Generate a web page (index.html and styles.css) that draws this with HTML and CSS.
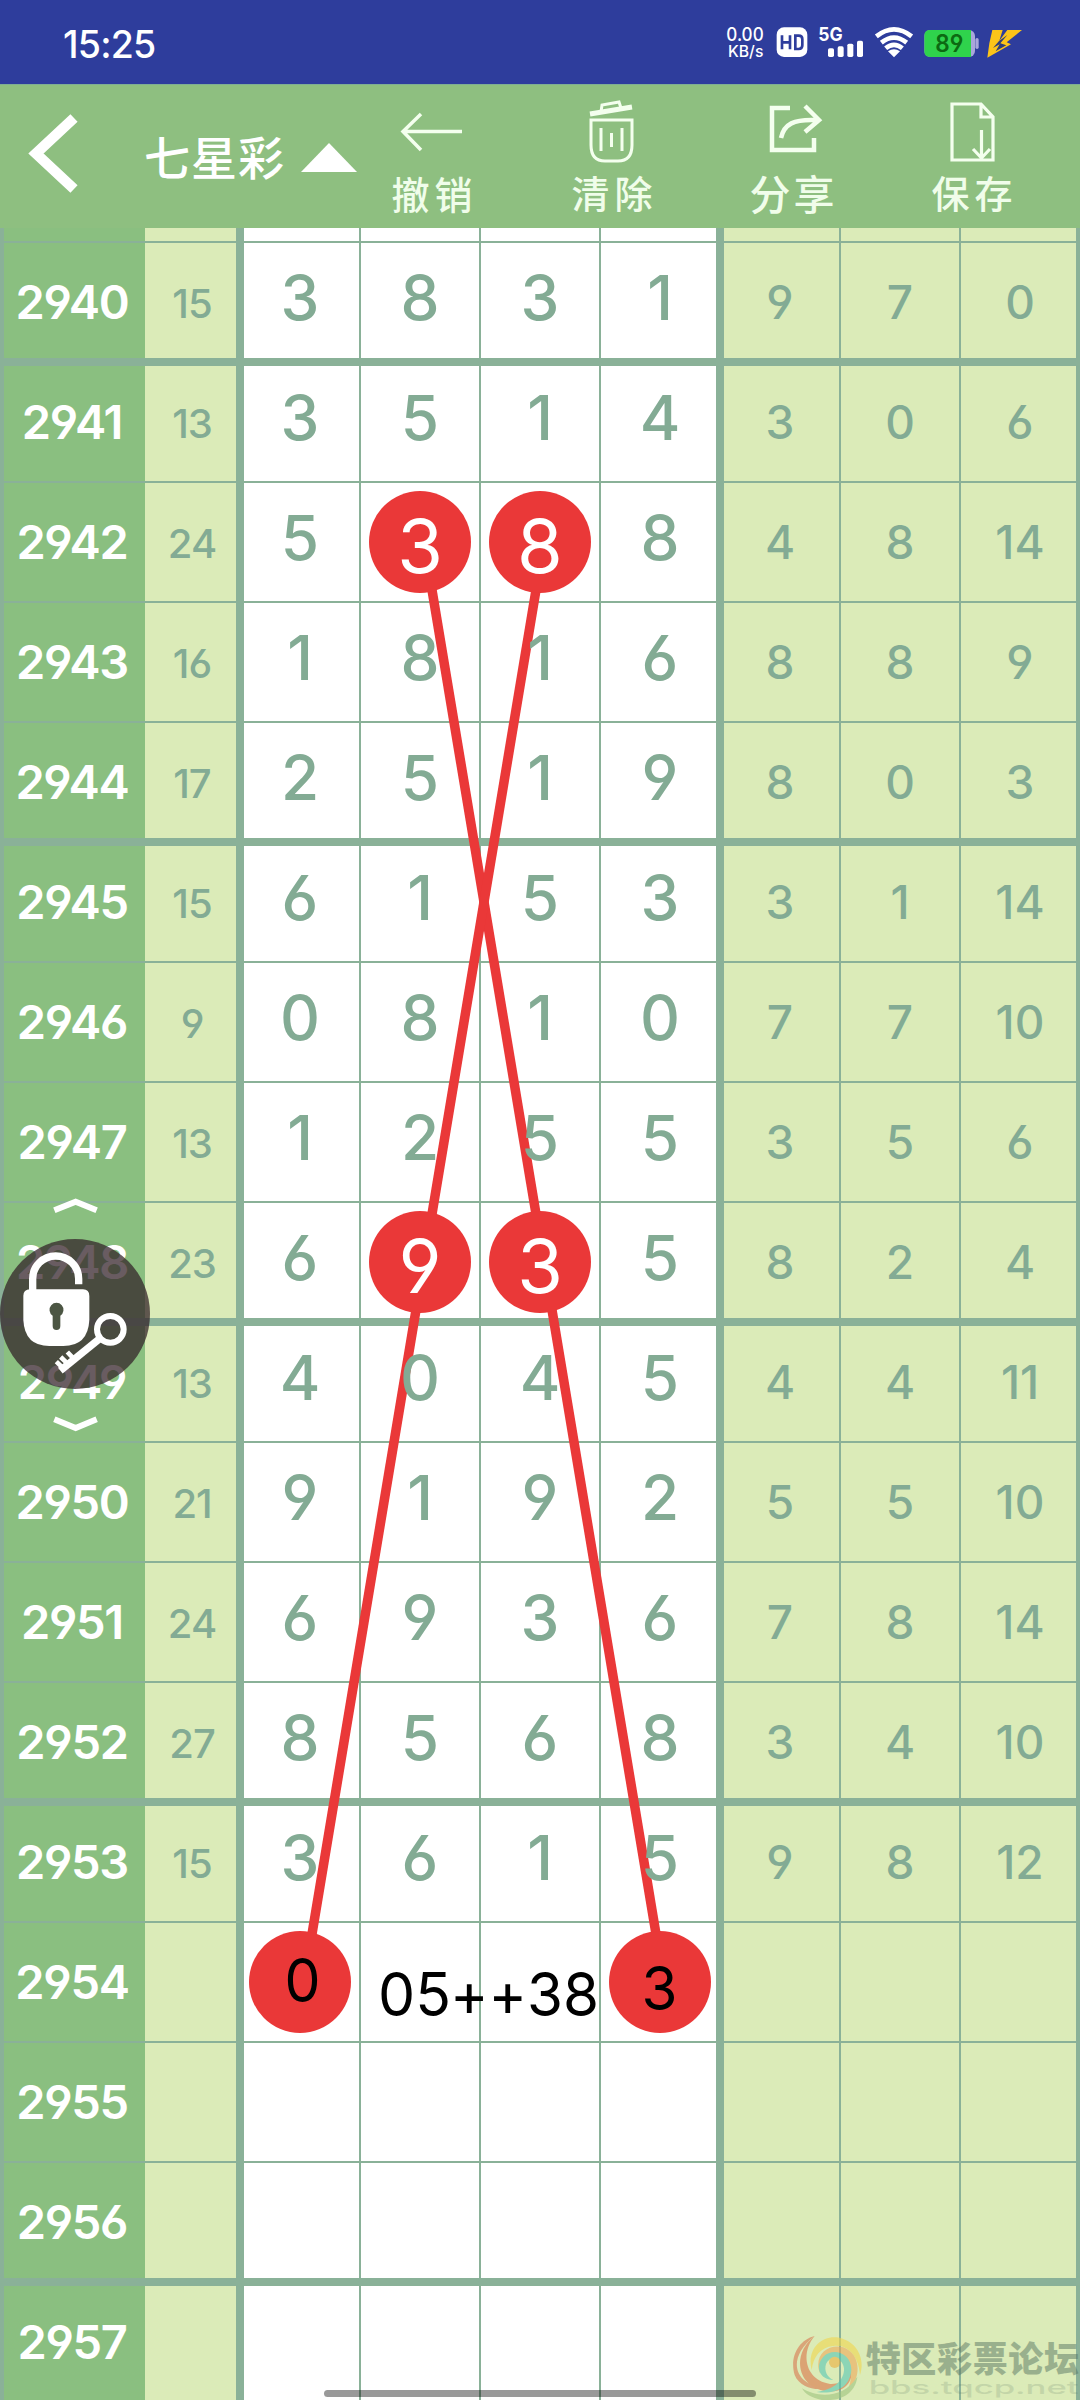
FILE: index.html
```html
<!DOCTYPE html>
<html lang="zh-CN">
<head>
<meta charset="utf-8">
<title>七星彩</title>
<link rel="stylesheet" href="styles.css">
</head>
<body>
<div class="screen">
<header class="status">
  <span class="clock">15:25</span>
  <svg class="status-icons" viewBox="0 0 960 192" width="320" height="64">
    <g fill="#fff" font-family="Inter, sans-serif">
      <text x="49" y="94" font-size="56" font-weight="500" textLength="112" lengthAdjust="spacingAndGlyphs">0.00</text>
      <text x="54" y="140" font-size="47" font-weight="500" textLength="106" lengthAdjust="spacingAndGlyphs">KB/s</text>
      <rect x="200" y="52" width="92" height="89" rx="22"/>
      <text x="325" y="94" font-size="56" font-weight="700" textLength="73" lengthAdjust="spacingAndGlyphs">5G</text>
      <rect x="354" y="115" width="18" height="26" rx="5"/>
      <rect x="383" y="109" width="18" height="32" rx="5"/>
      <rect x="412" y="101" width="18" height="40" rx="5"/>
      <rect x="441" y="92" width="18" height="49" rx="5"/>
      <path d="M534 124Q552 112 570 124L552 142Z"/>
    </g>
    <path d="M216 76V118M216 97H240M240 76V118M256 77V117H266Q277 117 277 106V88Q277 77 266 77Z" fill="none" stroke="#2e3d9c" stroke-width="8"/>
    <g fill="none" stroke="#fff" stroke-width="14">
      <path d="M499 79Q552 37 605 79"/>
      <path d="M514 98Q552 68 590 98"/>
      <path d="M527 115Q552 94 577 115"/>
    </g>
    <rect x="643" y="60" width="152" height="81" rx="18" fill="#a9a6dc"/>
    <rect x="796" y="84" width="10" height="33" rx="5" fill="#a9a6dc"/>
    <path d="M660 60H783V141H660Q643 141 643 124V77Q643 60 660 60Z" fill="#2fd34c"/>
    <text x="676" y="127" font-family="Inter, sans-serif" font-size="71" font-weight="600" textLength="84" lengthAdjust="spacingAndGlyphs" fill="#0c6a12">89</text>
    <path d="M847 60H878L868 92L892 60H936L890 97L903 103L832 143L838 100Z" fill="#fcc419"/>
    <path d="M867 93L849 114L869 103L857 124L889 106L871 100L892 75Z" fill="#2e3d7c"/>
  </svg>
</header>

<nav class="toolbar">
  <svg class="back" viewBox="0 0 60 90" width="60" height="90"><path d="M52 10L14 45.500L52 81" fill="none" stroke="#fff" stroke-width="10.500"/></svg>
  <div class="game">七星彩<svg viewBox="0 0 56 29" width="56" height="29"><path d="M0 29L28 0L56 29Z" fill="#fff"/></svg></div>
  <div class="actions">
    <div class="action"><svg viewBox="0 0 180 80" width="180" height="80" stroke-width="3.500"><path d="M120 40.500H61M79 23L61 40.500L79 59"/></svg><span>撤销</span></div>
    <div class="action up"><svg viewBox="0 0 180 80" width="180" height="80" stroke-width="3"><path d="M69 29H110V54Q110 70 96 70H83Q69 70 69 54ZM79 21L80 14L97 11L99 17M79 37V60M89.500 42V56M100 37V60"/><path d="M68 23L110 16" stroke-width="5"/></svg><span>清除</span></div>
    <div class="action up big"><svg viewBox="0 0 180 80" width="180" height="80" stroke-width="4.500"><path d="M88 17H70V59H112V47M79 47C82 33 92 28 114 29M103 15L117 29L103 41"/></svg><span>分享</span></div>
    <div class="action up"><svg viewBox="0 0 180 80" width="180" height="80" stroke-width="3.200"><path d="M70 13H99L111 26V69H70ZM99 13V26H111M99.500 39V67M91 58L99.500 67L108 58"/></svg><span>保存</span></div>
  </div>
</nav>

<main class="chart">
<table>
<tbody>
<tr class="cut"><th></th><td></td><td></td><td></td><td></td><td></td><td></td><td></td><td></td></tr>
<tr><th>2940</th><td>15</td><td>3</td><td>8</td><td>3</td><td>1</td><td>9</td><td>7</td><td>0</td></tr>
<tr><th>2941</th><td>13</td><td>3</td><td>5</td><td>1</td><td>4</td><td>3</td><td>0</td><td>6</td></tr>
<tr><th>2942</th><td>24</td><td>5</td><td class="hit"><span>3</span></td><td class="hit"><span>8</span></td><td>8</td><td>4</td><td>8</td><td>14</td></tr>
<tr><th>2943</th><td>16</td><td>1</td><td><span>8</span></td><td><span>1</span></td><td>6</td><td>8</td><td>8</td><td>9</td></tr>
<tr><th>2944</th><td>17</td><td>2</td><td><span>5</span></td><td><span>1</span></td><td>9</td><td>8</td><td>0</td><td>3</td></tr>
<tr><th>2945</th><td>15</td><td>6</td><td><span>1</span></td><td><span>5</span></td><td>3</td><td>3</td><td>1</td><td>14</td></tr>
<tr><th>2946</th><td>9</td><td>0</td><td><span>8</span></td><td><span>1</span></td><td>0</td><td>7</td><td>7</td><td>10</td></tr>
<tr><th>2947</th><td>13</td><td>1</td><td><span>2</span></td><td><span>5</span></td><td>5</td><td>3</td><td>5</td><td>6</td></tr>
<tr><th>2948</th><td>23</td><td>6</td><td class="hit"><span>9</span></td><td class="hit"><span>3</span></td><td>5</td><td>8</td><td>2</td><td>4</td></tr>
<tr><th>2949</th><td>13</td><td>4</td><td><span>0</span></td><td><span>4</span></td><td>5</td><td>4</td><td>4</td><td>11</td></tr>
<tr><th>2950</th><td>21</td><td>9</td><td>1</td><td>9</td><td>2</td><td>5</td><td>5</td><td>10</td></tr>
<tr><th>2951</th><td>24</td><td>6</td><td>9</td><td>3</td><td>6</td><td>7</td><td>8</td><td>14</td></tr>
<tr><th>2952</th><td>27</td><td>8</td><td>5</td><td>6</td><td>8</td><td>3</td><td>4</td><td>10</td></tr>
<tr><th>2953</th><td>15</td><td><span>3</span></td><td>6</td><td>1</td><td><span>5</span></td><td>9</td><td>8</td><td>12</td></tr>
<tr><th>2954</th><td></td><td></td><td></td><td></td><td></td><td></td><td></td><td></td></tr>
<tr><th>2955</th><td></td><td></td><td></td><td></td><td></td><td></td><td></td><td></td></tr>
<tr><th>2956</th><td></td><td></td><td></td><td></td><td></td><td></td><td></td><td></td></tr>
<tr><th>2957</th><td></td><td></td><td></td><td></td><td></td><td></td><td></td><td></td></tr>
</tbody>
</table>
<svg class="trend" viewBox="0 228 1080 2172" width="1080" height="2172">
  <g fill="none" stroke="#ea3838" stroke-width="9.500">
    <path d="M424 542L544 1262L664 1982"/>
    <path d="M544 542L424 1262L304 1982"/>
  </g>
  <g fill="#ea3838">
    <circle cx="420" cy="542" r="51"/><circle cx="540" cy="542" r="51"/>
    <circle cx="420" cy="1262" r="51"/><circle cx="540" cy="1262" r="51"/>
    <circle cx="300" cy="1982" r="51"/><circle cx="660" cy="1982" r="51"/>
  </g>
  <g fill="#000" font-family="Inter, sans-serif" font-size="61">
    <text x="302.500" y="2002" text-anchor="middle" textLength="36" lengthAdjust="spacingAndGlyphs">0</text>
    <text x="378" y="2016"><tspan textLength="73" lengthAdjust="spacingAndGlyphs">05</tspan><tspan x="450" textLength="77" lengthAdjust="spacingAndGlyphs">++</tspan><tspan x="527" textLength="72" lengthAdjust="spacingAndGlyphs">38</tspan></text>
    <text x="659.500" y="2010" text-anchor="middle" textLength="36" lengthAdjust="spacingAndGlyphs">3</text>
  </g>
</svg>
</main>

<svg class="lock" viewBox="0 0 480 750" width="160" height="250">
  <circle cx="225" cy="372" r="225" fill="#311f27" fill-opacity=".73"/>
  <g fill="none" stroke="#fff">
    <path d="M163 61L227 35L290 61M163 688L227 714L290 688" stroke-width="18"/>
    <path d="M98 308V266A69 68 0 0 1 236 266V283" stroke-width="22"/>
    <circle cx="331" cy="418" r="40" stroke-width="18"/>
    <path d="M300 445L181 542" stroke-width="22"/>
    <path d="M169 515L190 535M182 501L205 523M202 486L223 508" stroke-width="14"/>
  </g>
  <path d="M90 298H249Q268 298 268 318V390Q264 468 190 468H148Q74 468 70 390V318Q70 298 90 298Z" fill="#fff"/>
  <path d="M158 377A21 21 0 1 1 181 377V408Q181 420 169.500 420Q158 420 158 408Z" fill="#4c5643"/>
</svg>

<svg class="watermark" viewBox="0 0 900 240" width="300" height="80">
  <g opacity=".6">
    <path d="M104 48C10 120 50 205 145 202C115 215 60 205 44 165C28 112 55 60 104 48Z" fill="#d97850"/>
    <path d="M104 48C60 100 75 180 150 192C190 194 214 170 214 145C222 196 180 222 130 212C50 196 35 100 104 48Z" fill="#dc7448"/>
    <path d="M95 150C80 90 120 48 170 52C225 60 258 110 240 165C236 105 200 72 160 78C120 82 100 110 95 150Z" fill="#f2d64c"/>
    <path d="M120 160C100 110 140 70 190 82C240 100 250 170 200 218C225 165 215 110 175 100C140 92 118 120 120 160Z" fill="#efaa58"/>
    <path d="M160 180C118 178 104 140 130 110C160 80 215 100 214 150C210 200 170 224 110 216C160 210 194 182 192 145C188 112 150 104 138 132C132 152 140 170 160 180Z" fill="#58c7b5"/>
    <circle cx="164" cy="127" r="17" fill="#eeb03e"/>
    <path d="M66 205C115 235 190 235 232 170C226 222 180 240 145 240H125C95 234 75 222 66 205Z" fill="#9fc47e"/>
  </g>
  <g fill="#5a7663">
    <text x="257" y="157" font-family="'Noto Sans CJK SC', sans-serif" font-size="105" font-weight="900" textLength="640" opacity=".5">特区彩票论坛</text>
    <text x="266" y="221" font-family="Inter, sans-serif" font-size="54" font-weight="500" textLength="630" lengthAdjust="spacingAndGlyphs" opacity=".18">bbs.tqcp.net</text>
  </g>
</svg>
<div class="home-bar"></div>
</div>
</body>
</html>
```
FILE: styles.css
```css
* { box-sizing: border-box; }
body { margin: 0; background: #fff; }

.screen {
  position: relative;
  width: 1080px;
  height: 2400px;
  overflow: hidden;
  font-family: Inter, "Noto Sans CJK SC", sans-serif;
  font-feature-settings: "cv03", "cv04";
}

.status {
  display: flex;
  justify-content: space-between;
  height: 84px;
  padding: 10px 50px 0 63px;
  background: #2e3d9c;
  color: #fff;
}
.clock {
  font-size: 37.5px;
  font-weight: 500;
  line-height: 69px;
  letter-spacing: -0.8px;
}

.toolbar {
  display: flex;
  height: 144px;
  background: #8ebf80;
  border-top: 1px solid #7fae93;
  color: #fff;
  font-family: "Noto Sans CJK SC", sans-serif;
}
.back { margin: 23px 0 0 22px; }
.game {
  display: flex;
  width: 260px;
  padding-left: 62px;
  font-size: 46px;
  font-weight: 500;
  letter-spacing: 1px;
  line-height: 140px;
  white-space: nowrap;
}
.game svg { flex: none; margin: 58px 0 0 16px; }
.actions { display: flex; }
.action {
  display: flex;
  flex-direction: column;
  align-items: center;
  width: 180px;
  padding-top: 6px;
  font-size: 38px;
  font-weight: 500;
  line-height: 46px;
  color: #f0fdea;
}
.action svg { fill: none; stroke: #f4ffee; }
.action span { letter-spacing: 5px; margin: -1px -5px 0 0; }
.action.up span { margin-top: -2px; }
.action.big { font-size: 41px; }
.action.big span { letter-spacing: 3px; margin-right: -3px; }

.chart {
  position: relative;
  height: 2172px;
  overflow: hidden;
}
table, tbody { display: block; }
tr {
  display: grid;
  grid-template: 120px / 145px 95px repeat(7, 120px);
}
tr.cut { grid-template-rows: 14px; }

th, td {
  --left: 1px;
  --right: -1px;
  --top: 1px;
  --bottom: -1px;
  padding: 0;
  text-align: center;
  line-height: 120px;
  color: #83ab94;
  box-shadow:
    inset var(--left) var(--top) #8ab198,
    inset var(--right) var(--bottom) #8ab198;
}
tr.cut > * { --top: 0px; }
tr:nth-child(4n + 2) > * { --bottom: -4px; }
tr:nth-child(4n + 3) > * { --top: 4px; }

th {
  --left: 4px;
  --right: 0px;
  background: #8abf80;
  color: #fff;
  font-size: 47px;
  font-weight: 600;
  letter-spacing: -1.3px;
  padding-right: 1px;
}
td {
  background: #fff;
  font-size: 62px;
  font-weight: 500;
  line-height: 111px;
}
td:nth-child(2) {
  --left: 0px;
  --right: -4px;
  background: #dbebb8;
  font-size: 40px;
  letter-spacing: -1px;
  line-height: 124px;
  padding-right: 1px;
}
td:nth-child(3) { --left: 4px; }
td:nth-child(6) { --right: -4px; }
td:nth-child(n + 7) {
  background: #dbebb8;
  font-size: 46px;
  line-height: 120px;
}
td:nth-child(7) { --left: 4px; }
td:nth-child(9) { --right: -4px; }
td span { position: relative; z-index: 2; }
td.hit {
  color: #fff;
  font-size: 74px;
  font-weight: 400;
  line-height: 129px;
}

.trend {
  position: absolute;
  inset: 0;
  z-index: 1;
}
.lock {
  position: absolute;
  left: 0;
  top: 1190px;
  z-index: 3;
}
.watermark {
  position: absolute;
  right: 0;
  bottom: 0;
  z-index: 3;
}
.home-bar {
  position: absolute;
  left: 324px;
  bottom: 3px;
  z-index: 3;
  width: 432px;
  height: 7px;
  border-radius: 4px;
  background: rgba(0, 0, 0, .4);
}
```
